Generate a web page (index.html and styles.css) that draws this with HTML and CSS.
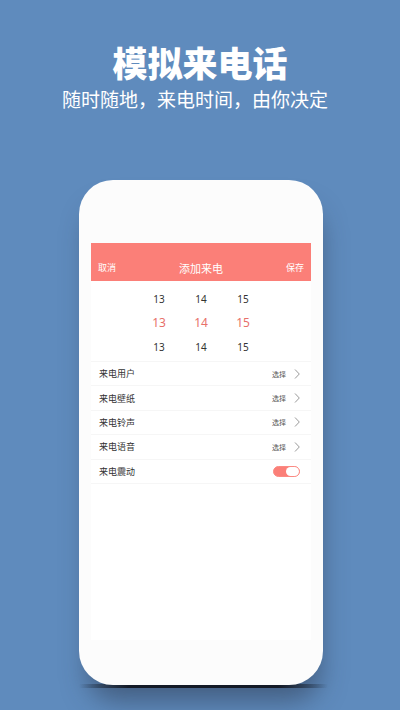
FILE: index.html
```
<!DOCTYPE html>
<html lang="zh-CN">
<head>
    <meta charset="UTF-8">
    <meta name="viewport" content="width=device-width, initial-scale=1.0">
    <title>模拟来电话</title>
    <link rel="stylesheet" href="styles.css">
</head>
<body>
    <header class="intro">
        <h1>模拟来电话</h1>
        <p>随时随地，来电时间，由你决定</p>
    </header>

    <main class="phone">
        <div class="screen">
            <div class="navbar">
                <button type="button" class="nav-btn">取消</button>
                <h2>添加来电</h2>
                <button type="button" class="nav-btn">保存</button>
            </div>

            <!-- time picker -->
            <div class="picker">
                <span>13</span><span>14</span><span>15</span>
                <span class="active">13</span><span class="active">14</span><span class="active">15</span>
                <span>13</span><span>14</span><span>15</span>
            </div>

            <div class="settings">
                <button type="button" class="row">
                    <span class="label">来电用户</span>
                    <span class="value">选择</span>
                    <svg class="arrow" viewBox="0 0 6 10"><path d="M1 0.5 L5.3 5 L1 9.5"/></svg>
                </button>
                <button type="button" class="row">
                    <span class="label">来电壁纸</span>
                    <span class="value">选择</span>
                    <svg class="arrow" viewBox="0 0 6 10"><path d="M1 0.5 L5.3 5 L1 9.5"/></svg>
                </button>
                <button type="button" class="row">
                    <span class="label">来电铃声</span>
                    <span class="value">选择</span>
                    <svg class="arrow" viewBox="0 0 6 10"><path d="M1 0.5 L5.3 5 L1 9.5"/></svg>
                </button>
                <button type="button" class="row">
                    <span class="label">来电语音</span>
                    <span class="value">选择</span>
                    <svg class="arrow" viewBox="0 0 6 10"><path d="M1 0.5 L5.3 5 L1 9.5"/></svg>
                </button>
                <div class="row">
                    <label class="label" for="vibrate">来电震动</label>
                    <input type="checkbox" class="switch" id="vibrate" checked>
                </div>
            </div>
        </div>
    </main>
</body>
</html>
```

FILE: styles.css
```
* {
    box-sizing: border-box;
}
body {
    font-family: 'Noto Sans CJK SC', sans-serif;
    background: #5f8bbd;
    margin: 0;
    min-height: 100vh;
    overflow-x: hidden;
}
h1, h2, p {
    margin: 0;
    font-weight: 400;
}
button {
    font-family: inherit;
    background: none;
    border: none;
    padding: 0;
    cursor: pointer;
}
.intro {
    padding-top: 41px;
    text-align: center;
    color: white;
}
.intro h1 {
    font-size: 35px;
    line-height: 42px;
    font-weight: 900;
}
.intro p {
    font-size: 19px;
    line-height: 32px;
    padding-right: 10px;
}
.phone {
    position: relative;
    width: 61%;
    margin: 65px auto 25px;
    padding: 63px 12px 45px;
    background: #fcfcfc;
    border-radius: 34px;
    box-shadow: 3px 22px 26px -6px rgba(40, 50, 70, 0.5);
    left: 1px;
}
/* contact shadow under the phone */
.phone::after {
    content: "";
    position: absolute;
    left: 0;
    right: -2%;
    bottom: -3px;
    height: 4px;
    z-index: -1;
    background: linear-gradient(90deg, transparent, #05090f 20%, #05090f 80%, transparent);
}
.screen {
    background: white;
    min-height: 397px;
}
.navbar {
    display: flex;
    align-items: flex-end;
    justify-content: space-between;
    height: 38px;
    padding: 0 7px 4px;
    background: #fb7f78;
    color: white;
}
.navbar h2 {
    font-size: 11px;
    line-height: 18px;
}
.nav-btn {
    color: white;
    font-size: 9px;
    line-height: 18px;
}
.picker {
    display: grid;
    grid-template-columns: repeat(3, 42px);
    grid-template-rows: repeat(3, 24px);
    place-items: center;
    justify-content: center;
    height: 80px;
    padding-top: 6px;
    font-family: 'Noto Sans', sans-serif;
    font-size: 10px;
    line-height: 24px;
    color: #333;
}
.picker .active {
    font-size: 12px;
    color: #e8706a;
}
.settings {
    display: grid;
    grid-auto-rows: 1fr;
    height: 123px;
    border-top: 1px solid #f6f6f6;
}
.row {
    display: flex;
    align-items: center;
    width: 100%;
    padding: 0 11px 0 8px;
    border-bottom: 1px solid #f6f6f6;
    color: #333;
}
.label {
    flex: 1;
    text-align: left;
    font-size: 9px;
}
.value {
    margin-right: 8px;
    font-size: 7px;
    color: #555;
}
.arrow {
    width: 6px;
    height: 10px;
    fill: none;
    stroke: #999;
    stroke-width: 1;
}
.switch {
    appearance: none;
    width: 27px;
    height: 11px;
    margin: 0;
    border: 1px solid #fb8a83;
    border-radius: 6px;
    background: #fb7f78;
    cursor: pointer;
}
.switch::before {
    content: "";
    display: block;
    width: 13px;
    height: 9px;
    border-radius: 5px;
    background: white;
}
.switch:checked::before {
    margin-left: auto;
}
```
